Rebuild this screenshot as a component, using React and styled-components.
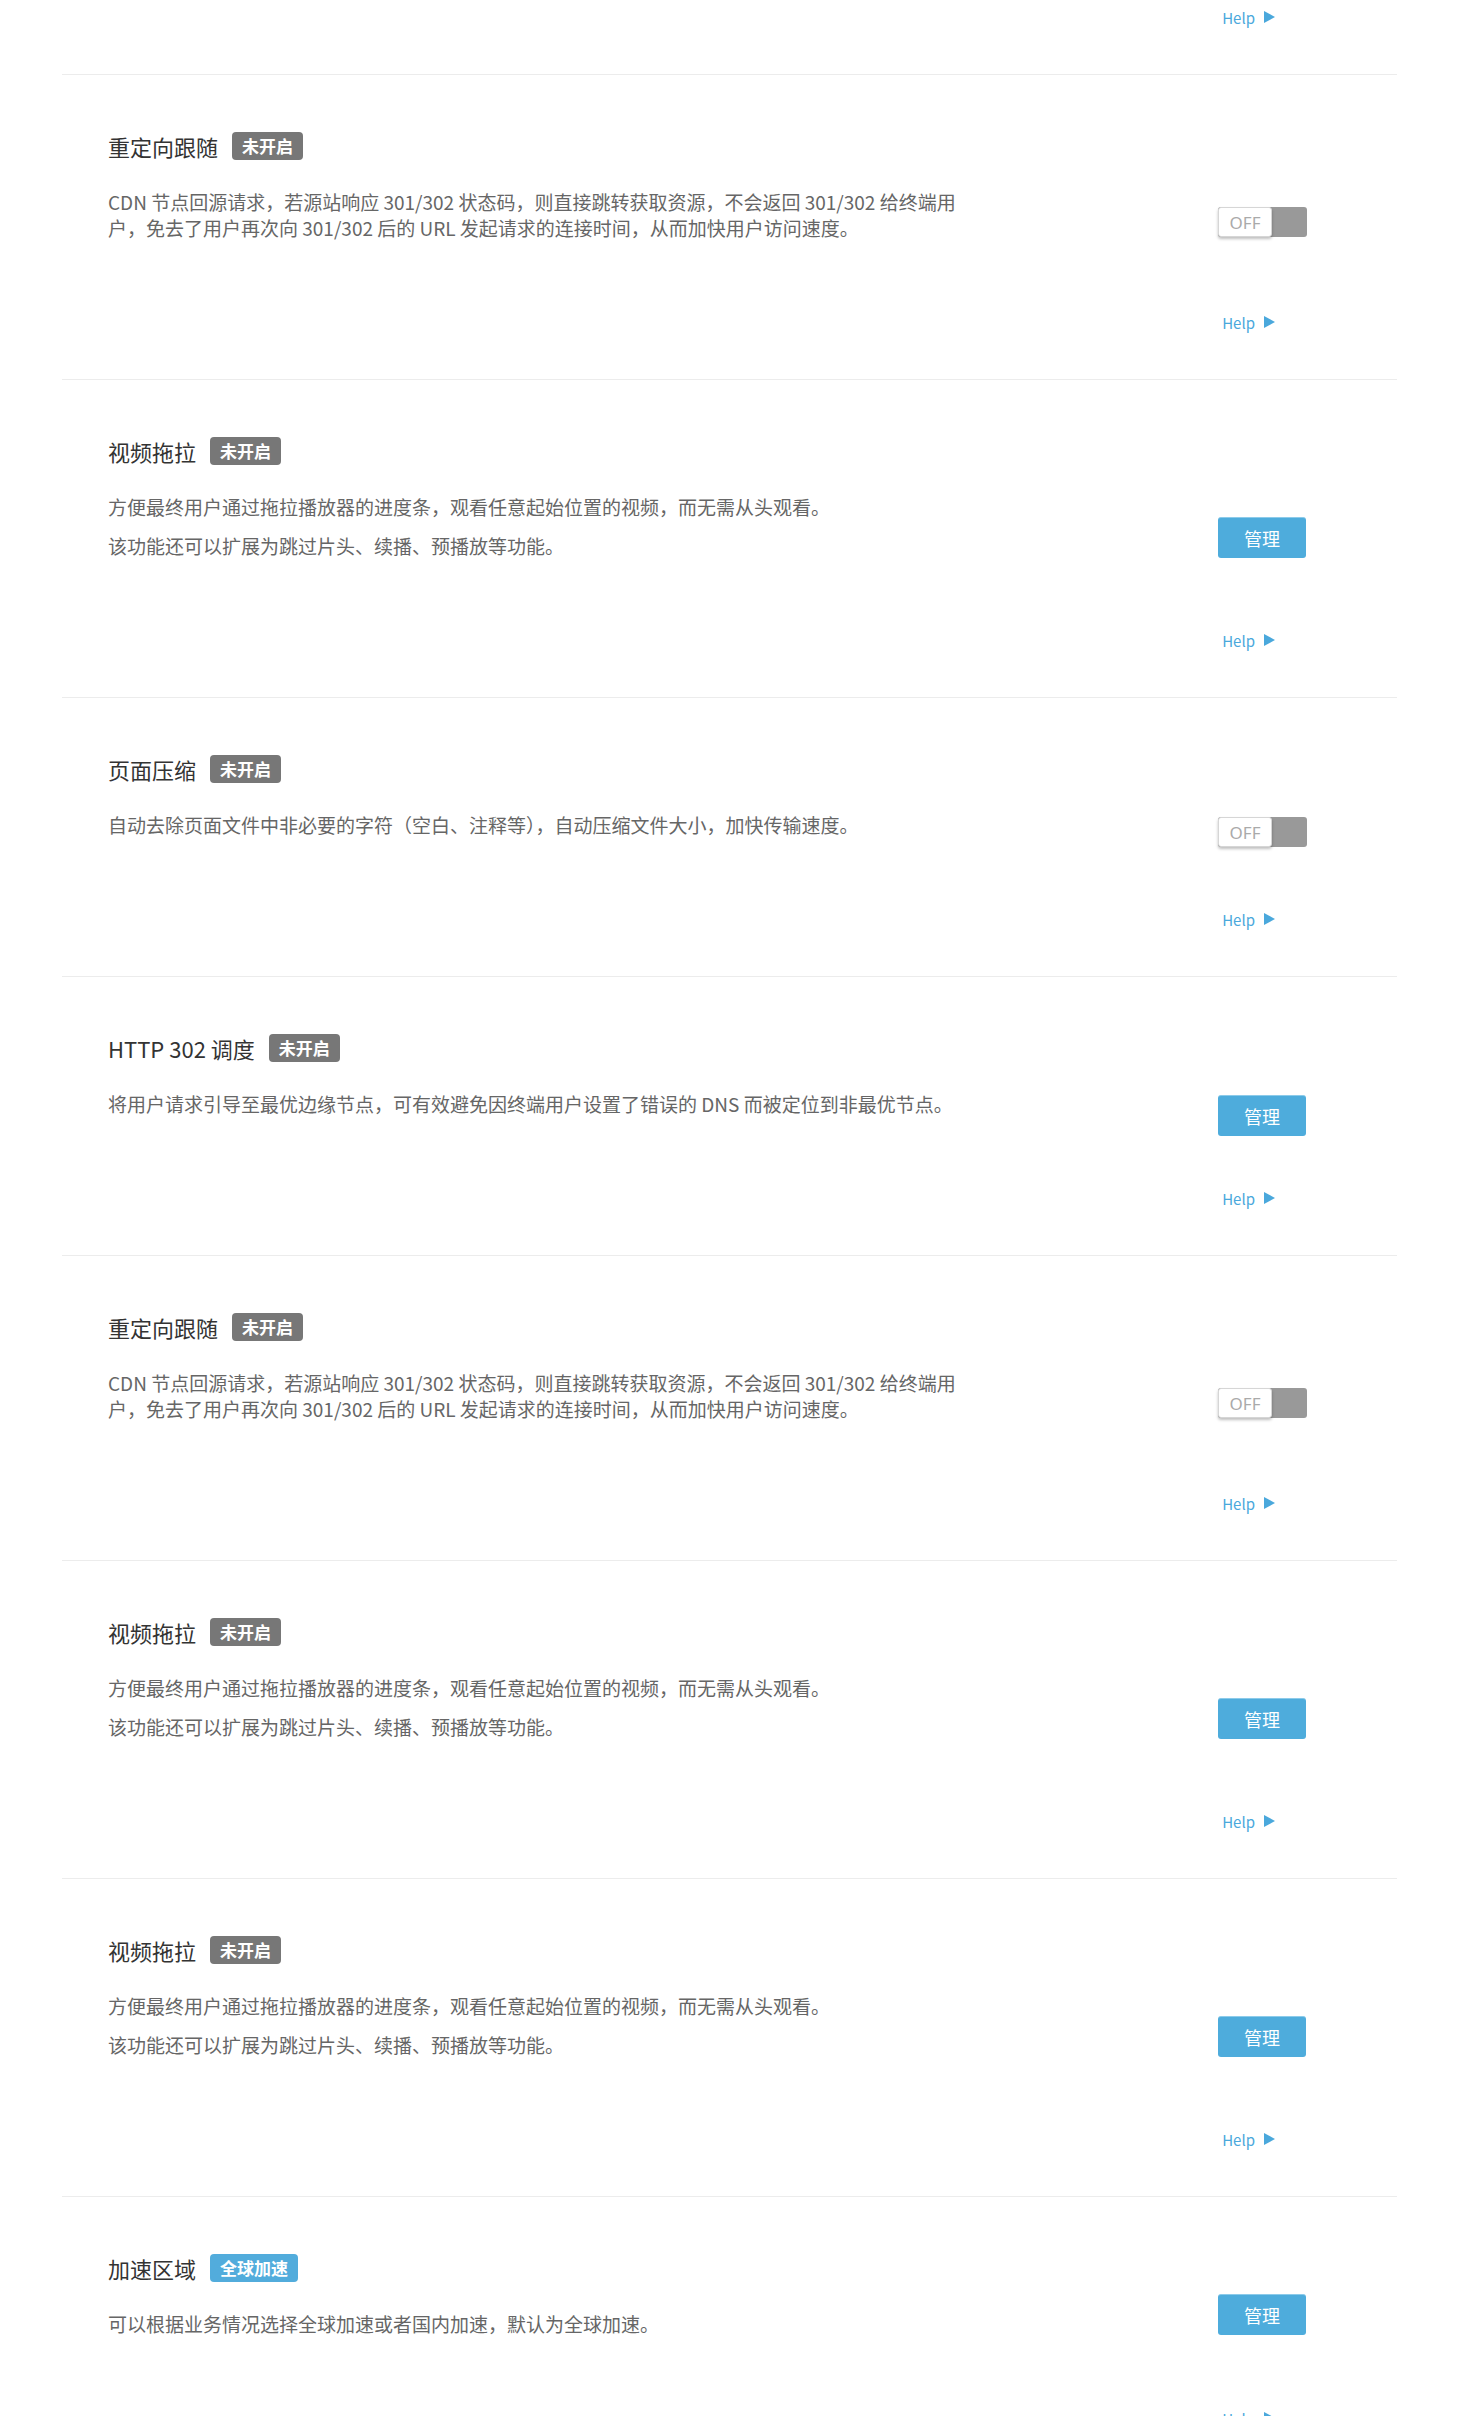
import React from "react";
import styled, { createGlobalStyle } from "styled-components";

const GlobalStyle = createGlobalStyle`
  body {
    margin: 0;
    background: #fff;
    font-family: "Noto Sans CJK SC", "Noto Sans", sans-serif;
  }
`;

const Page = styled.div`
  padding: 0 62px;
`;

const Tail = styled.div`
  padding: 7px 90px 47px 46px;
  border-bottom: 1px solid #ececec;
`;

const Section = styled.section`
  padding: 56px 90px 47px 46px;
  border-bottom: 1px solid #ececec;
`;

const Head = styled.div`
  display: flex;
  align-items: center;
  gap: 14px;
  height: 30px;
`;

const Title = styled.h3`
  margin: 0;
  font-size: 22px;
  font-weight: normal;
  line-height: 30px;
  color: #333;
`;

const Badge = styled.span`
  display: inline-block;
  height: 28px;
  line-height: 28px;
  padding: 0 10px;
  border-radius: 4px;
  font-size: 17px;
  font-weight: bold;
  color: #fff;
  background: ${({ $on }) => ($on ? "#52acdc" : "#777")};
`;

const Body = styled.div`
  display: flex;
  align-items: center;
  margin-top: 28px;
`;

const Desc = styled.div`
  flex: 1;
  max-width: 855px;
  font-size: 19px;
  line-height: 26px;
  color: #666;

  p {
    margin: 0;
  }
  p + p {
    margin-top: 13px;
  }
`;

const Slot = styled.div`
  width: 89px;
  height: 0;
  margin-left: auto;
  margin-top: ${({ $shift }) => $shift}px;
  margin-bottom: ${({ $shift }) => -$shift}px;
  display: flex;
  align-items: center;
`;

const Switch = styled.div`
  display: flex;
  width: 89px;
  height: 30px;
  background: #999;
  border-radius: 3px;
`;

const Knob = styled.span`
  box-sizing: border-box;
  width: 54px;
  height: 30px;
  display: flex;
  align-items: center;
  justify-content: center;
  background: #fff;
  border: 1px solid #d6d6d6;
  border-radius: 3px;
  box-shadow: 0 2px 3px rgba(0, 0, 0, 0.25);
  font-family: "Noto Sans", sans-serif;
  font-size: 17px;
  color: #aaa;
`;

const Button = styled.button`
  width: 88px;
  height: 41px;
  border: none;
  border-top: 1px solid #8ccbea;
  border-radius: 3px;
  background: #4eacdc;
  color: #fff;
  font-family: "Noto Sans CJK SC", sans-serif;
  font-size: 18px;
  cursor: pointer;
`;

const HelpRow = styled.div`
  display: flex;
  justify-content: flex-end;
  align-items: center;
  height: 20px;
  margin-top: ${({ $top }) => ($top ? "71px" : "0")};
  padding-right: 32px;
`;

const HelpLink = styled.a`
  display: inline-flex;
  align-items: center;
  gap: 9px;
  font-size: 15px;
  color: #4aa8dc;
  text-decoration: none;
`;

const Arrow = () => (
  <svg width="11" height="12" viewBox="0 0 11 12">
    <polygon points="0,0 11,6 0,12" fill="#4aa8dc" />
  </svg>
);

const Help = ({ top }) => (
  <HelpRow $top={top}>
    <HelpLink href="#">
      Help
      <Arrow />
    </HelpLink>
  </HelpRow>
);

const redirectText =
  "CDN 节点回源请求，若源站响应 301/302 状态码，则直接跳转获取资源，不会返回 301/302 给终端用户，免去了用户再次向 301/302 后的 URL 发起请求的连接时间，从而加快用户访问速度。";

const dragText = [
  "方便最终用户通过拖拉播放器的进度条，观看任意起始位置的视频，而无需从头观看。",
  "该功能还可以扩展为跳过片头、续播、预播放等功能。",
];

const items = [
  { title: "重定向跟随", badge: "未开启", desc: [redirectText], control: "switch" },
  { title: "视频拖拉", badge: "未开启", desc: dragText, control: "button" },
  {
    title: "页面压缩",
    badge: "未开启",
    desc: ["自动去除页面文件中非必要的字符（空白、注释等），自动压缩文件大小，加快传输速度。"],
    control: "switch",
  },
  {
    title: "HTTP 302 调度",
    badge: "未开启",
    desc: ["将用户请求引导至最优边缘节点，可有效避免因终端用户设置了错误的 DNS 而被定位到非最优节点。"],
    control: "button",
  },
  { title: "重定向跟随", badge: "未开启", desc: [redirectText], control: "switch" },
  { title: "视频拖拉", badge: "未开启", desc: dragText, control: "button" },
  { title: "视频拖拉", badge: "未开启", desc: dragText, control: "button" },
  {
    title: "加速区域",
    badge: "全球加速",
    on: true,
    desc: ["可以根据业务情况选择全球加速或者国内加速，默认为全球加速。"],
    control: "button",
    shift: -10,
  },
];

function Feature({ item }) {
  const isSwitch = item.control === "switch";
  const shift = item.shift ?? (isSwitch ? 7 : 11);
  return (
    <Section>
      <Head>
        <Title>{item.title}</Title>
        <Badge $on={item.on}>{item.badge}</Badge>
      </Head>
      <Body>
        <Desc>
          {item.desc.map((p, i) => (
            <p key={i}>{p}</p>
          ))}
        </Desc>
        <Slot $shift={shift}>
          {isSwitch ? (
            <Switch>
              <Knob>OFF</Knob>
            </Switch>
          ) : (
            <Button type="button">管理</Button>
          )}
        </Slot>
      </Body>
      <Help top />
    </Section>
  );
}

export default function App() {
  return (
    <>
      <GlobalStyle />
      <Page>
        <Tail>
          <Help />
        </Tail>
        {items.map((item, i) => (
          <Feature key={i} item={item} />
        ))}
      </Page>
    </>
  );
}
